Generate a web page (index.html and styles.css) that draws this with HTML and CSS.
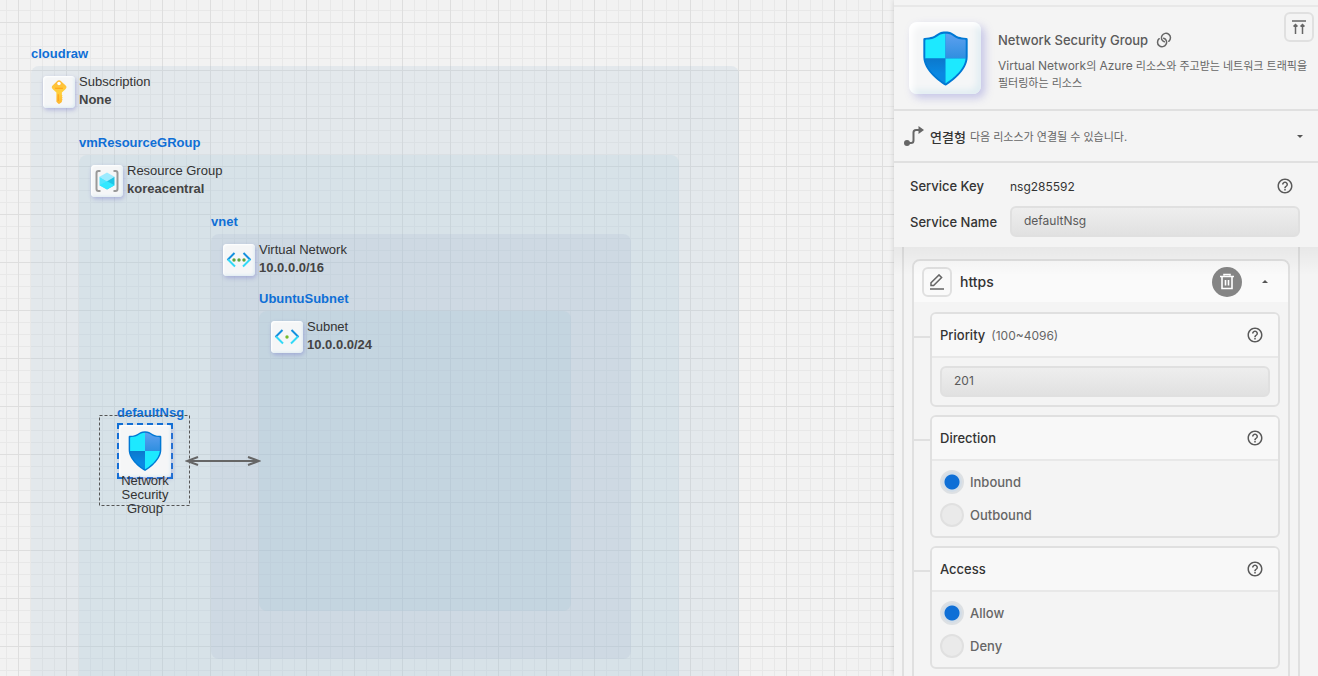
FILE: index.html
```html
<!DOCTYPE html>
<html lang="ko">
<head>
<meta charset="utf-8">
<title>Network Security Group</title>
<link rel="stylesheet" href="styles.css">
</head>
<body>
<svg class="defs" aria-hidden="true">
  <defs>
    <linearGradient id="shieldBlue" x1="0" y1="0" x2="0" y2="1"><stop offset="0" stop-color="#5ea0ef"/><stop offset="1" stop-color="#2f8fe0"/></linearGradient>
    <linearGradient id="shieldDeep" x1="0" y1="0" x2="0" y2="1"><stop offset="0" stop-color="#0c78cc"/><stop offset=".6" stop-color="#0a88e2"/></linearGradient>
    <linearGradient id="keyGold" x1="0" y1="0" x2="0" y2="1"><stop offset="0" stop-color="#feb836"/><stop offset=".5" stop-color="#ffd03c"/><stop offset="1" stop-color="#feb52f"/></linearGradient>
    <symbol id="shield" viewBox="0 0 18 18">
      <path fill="#0078d4" d="M16 8.44c0 4.57-5.53 8.25-6.73 9a.43.43 0 0 1-.46 0C7.57 16.69 2 13 2 8.44v-5.5a.44.44 0 0 1 .43-.44C6.77 2.39 5.78.5 9 .5s2.23 1.89 6.57 2a.44.44 0 0 1 .43.44z"/>
      <path fill="#1de9ff" d="M9 1.17C6 1.17 7 2.9 3 3a.4.4 0 0 0-.38.4V9H9z"/>
      <path fill="url(#shieldBlue)" d="M9 1.17C12 1.17 11 2.9 15 3a.4.4 0 0 1 .38.4V9H9z"/>
      <path fill="url(#shieldDeep)" d="M2.65 9c.37 3.9 5.1 7.1 6.14 7.73a.4.4 0 0 0 .21.06V9z"/>
      <path fill="#1de9ff" d="M15.35 9c-.37 3.9-5.1 7.1-6.14 7.73a.4.4 0 0 1-.21.06V9z"/>
    </symbol>
    <symbol id="help" viewBox="0 0 24 24">
      <path fill="#5a5a5a" d="M11 18h2v-2h-2v2zm1-16C6.48 2 2 6.48 2 12s4.48 10 10 10 10-4.480 10-10S17.52 2 12 2zm0 18c-4.41 0-8-3.59-8-8s3.59-8 8-8 8 3.59 8 8-3.59 8-8 8zm0-14c-2.210 0-4 1.790-4 4h2c0-1.100.9-2 2-2s2 .9 2 2c0 2-3 1.750-3 5h2c0-2.250 3-2.500 3-5 0-2.210-1.790-4-4-4z"/>
    </symbol>
  </defs>
</svg>

<div class="app">
  <main class="canvas">
    <section class="group group-subscription">
      <h2 class="group-name">cloudraw</h2>
      <div class="group-head">
        <span class="tile"><svg width="26" height="26" viewBox="0 0 18 18"><path fill="url(#keyGold)" d="M9 .8c.6 0 1 .3 1.4.7l3.200 3c.8.8.8 1.600 0 2.400l-2.600 2.500v1.600l.5.600-.5.600.5.800-.5.700.5.600-.5.700v.9L9.600 17a.8.800 0 0 1-1.200 0L7.200 15.700V9.400L4.600 6.900c-.8-.8-.8-1.600 0-2.400l3-3C8 1.100 8.400.8 9 .8z"/><circle cx="9" cy="3.100" r="1.200" fill="#fff"/><path fill="#ff9d14" d="M6.300 6h5.400v.8H6.300zM8.100 10.500h.7v4.800h-.7z"/></svg></span>
        <p class="group-text">Subscription<br><b>None</b></p>
      </div>
    </section>
    <section class="group group-resource">
      <h2 class="group-name">vmResourceGRoup</h2>
      <div class="group-head">
        <span class="tile"><svg width="26" height="26" viewBox="0 0 26 26"><path fill="none" stroke="#999" stroke-width="2" d="M6.500 3H4.500Q2.500 3 2.500 5v16q0 2 2 2h2M19.500 3h2q2 0 2 2v16q0 2-2 2h-2"/><path fill="#9cebff" d="m13 4.500 7.500 4.300-7.500 4.400-7.500-4.400z"/><path fill="#50e6ff" d="M5.500 8.800 13 13.200v8.300l-7.500-4.300z"/><path fill="#20c5e6" d="M20.500 8.800 13 13.200v8.300l7.500-4.300z"/><path fill="#32e8ff" d="m5.500 17.200 7.500-4 7.500 4-7.500 4.300z"/></svg></span>
        <p class="group-text">Resource Group<br><b>koreacentral</b></p>
      </div>
    </section>
    <section class="group group-vnet">
      <h2 class="group-name">vnet</h2>
      <div class="group-head">
        <span class="tile"><svg width="26" height="26" viewBox="0 0 26 26" fill="none" stroke-width="2"><path stroke="#1490df" d="m8.500 6-7 7M17.500 6l7 7"/><path stroke="#32d9f7" d="m2 12.500 7 7M24 12.500l-7 7"/><g fill="#5ea33c"><circle cx="8" cy="13" r="1.700"/><circle cx="13" cy="13" r="1.700"/><circle cx="18" cy="13" r="1.700"/></g></svg></span>
        <p class="group-text">Virtual Network<br><b>10.0.0.0/16</b></p>
      </div>
    </section>
    <section class="group group-subnet">
      <h2 class="group-name">UbuntuSubnet</h2>
      <div class="group-head">
        <span class="tile"><svg width="26" height="26" viewBox="0 0 26 26" fill="none" stroke-width="2"><path stroke="#1490df" d="m8.500 6-7 7M17.500 6l7 7"/><path stroke="#32d9f7" d="m2 12.500 7 7M24 12.500l-7 7"/><circle cx="13" cy="13" r="1.700" fill="#76bc2d"/></svg></span>
        <p class="group-text">Subnet<br><b>10.0.0.0/24</b></p>
      </div>
    </section>
    <section class="node">
      <h2 class="node-name">defaultNsg</h2>
      <span class="node-frame"><span class="tile tile-node"><svg width="42" height="42"><use href="#shield"/></svg></span></span>
      <p class="node-text">Network<br>Security<br>Group</p>
    </section>
    <svg class="node-bounds" width="92" height="92"><rect x=".5" y=".5" width="90" height="90" fill="none" stroke="#555" stroke-dasharray="3 2"/></svg>
    <svg class="link-line" width="76" height="12" viewBox="0 0 76 12" fill="none" stroke="#666" stroke-width="2"><path d="M3 6h70M13 2 2 6l11 4M63 2l11 4-11 4"/></svg>
  </main>

  <aside class="panel">
    <header class="resource">
      <span class="tile tile-large"><svg width="57" height="57"><use href="#shield"/></svg></span>
      <div class="resource-text">
        <h1 class="resource-title">Network Security Group
          <a class="resource-link" href="#docs" aria-label="Documentation"><svg width="16" height="16" viewBox="0 0 16 16" fill="none" stroke="#666" stroke-width="1.500" stroke-linecap="round"><path d="M8.300 9.800C5.600 9 4.600 6 6 3.700a4.500 4.500 0 1 1 6.800 5.600"/><path d="M7.700 6.200c2.700.8 3.700 3.800 2.300 6.100a4.500 4.500 0 1 1-6.800-5.600"/></svg></a>
        </h1>
        <p class="resource-desc"><span class="latin">Virtual Network</span>의 <span class="latin">Azure</span> 리소스와 주고받는 네트워크 트래픽을 필터링하는 리소스</p>
      </div>
      <button class="square-button pin-top" aria-label="Scroll to top"><svg width="14" height="14" viewBox="0 0 14 14" fill="none" stroke="#666" stroke-width="1.500"><path d="M0 1h14M3.500 14V5M10.500 14V5M1.500 6.500l2-2 2 2M8.500 6.500l2-2 2 2"/></svg></button>
    </header>

    <section class="connect">
      <svg width="20" height="20" viewBox="0 0 20 20"><circle cx="3" cy="17" r="3" fill="#666"/><path fill="none" stroke="#666" stroke-width="2" d="M3 17h4q2.500 0 2.500-2.500V6.500Q9.500 4 12 4h4"/><path fill="#666" d="m14.500 0 5.500 4-5.500 4z"/></svg>
      <h2 class="connect-title">연결형</h2>
      <p class="connect-text">다음 리소스가 연결될 수 있습니다.</p>
      <button class="caret" aria-label="Expand"><svg width="6" height="3"><path fill="#555" d="M0 0h6L3 3z"/></svg></button>
    </section>

    <section class="service">
      <span class="field-label">Service Key</span>
      <div class="service-key"><span>nsg285592</span><button class="help" aria-label="Help"><svg width="18" height="18"><use href="#help"/></svg></button></div>
      <label class="field-label" for="service-name">Service Name</label>
      <input class="text-input" id="service-name" type="text" value="defaultNsg">
    </section>

    <div class="details">
      <div class="rules">
        <section class="rule">
          <header class="rule-head">
            <button class="square-button" aria-label="Edit"><svg width="16" height="16" viewBox="0 0 16 16" fill="none" stroke="#666" stroke-width="1.500"><path d="M1 15h14M2 11.500V8.800L10 .900l2.600 2.600-8 8z"/></svg></button>
            <h2 class="rule-name">https</h2>
            <button class="delete" aria-label="Delete"><svg width="16" height="18" viewBox="0 0 16 18" fill="none" stroke="#fff" stroke-width="1.600"><path d="M1 3.500h14M5 2.500V1.500h6v1M3 3.500v12h10v-12M6.500 7v5.500M9.500 7v5.500"/></svg></button>
            <button class="caret" aria-label="Collapse"><svg width="6" height="3"><path fill="#555" d="M0 3h6L3 0z"/></svg></button>
          </header>
          <div class="cards">
            <section class="card">
              <header class="card-head"><label class="card-title" for="priority">Priority</label><span class="card-hint">(100~4096)</span><button class="help" aria-label="Help"><svg width="18" height="18"><use href="#help"/></svg></button></header>
              <div class="card-input"><input class="text-input" id="priority" type="text" value="201"></div>
            </section>
            <section class="card">
              <header class="card-head"><h3 class="card-title">Direction</h3><button class="help" aria-label="Help"><svg width="18" height="18"><use href="#help"/></svg></button></header>
              <div class="options">
                <label class="option"><input class="radio" type="radio" name="direction" checked>Inbound</label>
                <label class="option"><input class="radio" type="radio" name="direction">Outbound</label>
              </div>
            </section>
            <section class="card">
              <header class="card-head"><h3 class="card-title">Access</h3><button class="help" aria-label="Help"><svg width="18" height="18"><use href="#help"/></svg></button></header>
              <div class="options">
                <label class="option"><input class="radio" type="radio" name="access" checked>Allow</label>
                <label class="option"><input class="radio" type="radio" name="access">Deny</label>
              </div>
            </section>
          </div>
        </section>
      </div>
    </div>
  </aside>
</div>
</body>
</html>
```
FILE: styles.css
```css
* { box-sizing: border-box; }
body { margin: 0; font-family: Inter, "Noto Sans CJK KR", sans-serif; font-size: 13px; color: #333; }
h1, h2, h3, p { margin: 0; font-size: inherit; font-weight: inherit; }
button { padding: 0; border: 0; background: none; display: flex; align-items: center; justify-content: center; }
svg { display: block; flex: none; }
.defs { position: absolute; width: 0; height: 0; }

.app { display: flex; height: 100vh; overflow: hidden; background: #f4f4f4; }

.canvas {
  position: relative;
  flex: 1;
  overflow: hidden;
  font-family: "Liberation Sans", sans-serif;
  line-height: 18px;
  background-color: #f2f2f2;
  background-image:
    linear-gradient(90deg, #dedede 1px, transparent 1px),
    linear-gradient(#dedede 1px, transparent 1px),
    linear-gradient(90deg, #e8e8e8 1px, transparent 1px),
    linear-gradient(#e8e8e8 1px, transparent 1px);
  background-size: 48px 48px, 48px 48px, 12px 12px, 12px 12px;
  background-position: 18px 22px, 18px 22px, 6px 10px, 6px 10px;
}
.group { position: absolute; border-radius: 8px; }
.group-subscription { left: 31px; top: 66px; width: 708px; height: 720px; background: rgba(175, 198, 214, .22); }
.group-resource { left: 79px; top: 155px; width: 600px; height: 580px; background: rgba(160, 198, 214, .18); }
.group-vnet { left: 211px; top: 234px; width: 420px; height: 425px; background: rgba(168, 186, 208, .2); }
.group-subnet { left: 259px; top: 311px; width: 312px; height: 300px; background: rgba(156, 196, 212, .18); }
.group-name, .node-name { color: #0f6fd6; font-weight: 700; white-space: nowrap; }
.group-name { position: absolute; left: 0; bottom: 100%; padding-bottom: 3px; }
.group-head { display: flex; gap: 4px; padding: 7px 12px; }
.group-head .tile { margin-top: 3px; }
.group-text b { color: #444; }

.tile {
  display: flex;
  align-items: center;
  justify-content: center;
  flex: none;
  width: 32px;
  height: 32px;
  border-radius: 4px;
  background: #f5f6f7;
  box-shadow: 1px 2px 4px rgba(120, 120, 200, .45), inset 1px 1px 2px #fff, inset -1px -1px 3px #dcebf2;
}
.tile-node { width: 52px; height: 52px; }
.tile-large {
  width: 72px;
  height: 72px;
  border-radius: 8px;
  box-shadow: 4px 4px 8px rgba(120, 120, 210, .38), inset 4px 4px 6px #fff, inset -4px -4px 6px #e0edf2;
}

.node { position: absolute; left: 117px; top: 404px; width: 56px; display: flex; flex-direction: column; align-items: center; }
.node-name { align-self: flex-start; }
.node-frame { display: block; margin-top: 1px; border: 2px dashed #0f6fd6; }
.node-text { margin-top: -5px; text-align: center; line-height: 14px; color: #333; }
.node-bounds { position: absolute; left: 99px; top: 415px; }
.link-line { position: absolute; left: 185px; top: 455px; }

.panel {
  position: relative;
  flex: none;
  width: 424px;
  display: flex;
  flex-direction: column;
  background: #f4f4f4;
  box-shadow: 0 0 5px rgba(0, 0, 0, .16);
}
.resource {
  display: flex;
  margin-top: 5px;
  padding: 15px 4px 15px 15px;
  border-top: 2px solid #e8e8e8;
  border-bottom: 2px solid #e0e0e0;
}
.resource-text { flex: 1; padding: 8px 0 0 17px; }
.resource-title { display: flex; align-items: center; gap: 8px; line-height: 20px; font-weight: 500; color: #5a5a5a; }
.resource-desc { margin-top: 7px; margin-right: -24px; font-size: 11px; line-height: 17px; color: #666; word-break: keep-all; }
.latin { font-size: 12px; }
.square-button { flex: none; width: 30px; height: 30px; border: 2px solid #e0e0e0; border-radius: 6px; }
.pin-top { margin-top: -10px; }

.connect { display: flex; align-items: center; height: 52px; padding: 0 10px; border-bottom: 2px solid #e0e0e0; }
.connect-title { margin-left: 6px; font-weight: 500; }
.connect-text { margin-left: 4px; flex: 1; font-size: 11px; color: #666; }
.caret { flex: none; width: 16px; height: 24px; }

.service {
  display: grid;
  grid-template-columns: 100px 1fr;
  grid-template-rows: 30px 31px;
  row-gap: 5px;
  align-items: center;
  padding: 8px 18px 10px 16px;
}
.field-label { font-weight: 500; }
.service-key { display: flex; align-items: center; justify-content: space-between; padding-right: 6px; font-size: 12px; }
.text-input {
  display: block;
  width: 100%;
  height: 31px;
  padding: 0 12px 2px;
  border: 2px solid #e0e0e0;
  border-radius: 6px;
  background: linear-gradient(#eee, #e1e1e1);
  font: 12px Inter, sans-serif;
  color: #5a5a5a;
}

.details { position: relative; flex: 1; min-height: 0; overflow: hidden; padding: 0 18px 0 8px; }
.details::before {
  content: "";
  position: absolute;
  inset: 0 0 auto;
  height: 28px;
  background: linear-gradient(rgba(0, 0, 0, .05), transparent);
  pointer-events: none;
}
.rules { padding: 12px 8px 0; border: solid #e0e0e0; border-width: 0 2px; }
.rule { border: 2px solid #e0e0e0; border-radius: 8px; }
.rule-head { display: flex; align-items: center; height: 41px; padding: 0 15px 0 8px; border-radius: 6px 6px 0 0; background: #fafafa; }
.rule-name { flex: 1; padding-left: 8px; font-size: 14px; font-weight: 500; }
.delete { width: 30px; height: 30px; border-radius: 50%; background: #858585; margin-right: 15px; }
.cards { display: flex; flex-direction: column; gap: 8px; padding: 10px 8px 16px 16px; }
.card { position: relative; border: 2px solid #e0e0e0; border-radius: 6px; }
.card::before { content: ""; position: absolute; top: 22px; right: 100%; width: 18px; height: 2px; background: #e0e0e0; }
.card-head { display: flex; align-items: center; height: 44px; padding: 0 14px 0 8px; border-bottom: 2px solid #e8e8e8; border-radius: 4px 4px 0 0; background: #f8f8f8; }
.card-title { font-weight: 500; }
.card-hint { padding-left: 6px; font-size: 12px; color: #666; }
.card-head .help { margin-left: auto; }
.card-input { padding: 8px; }
.options { padding: 4px 8px 5px; }
.option { display: flex; align-items: center; gap: 6px; height: 33px; font-weight: 500; color: #666; }
.radio { appearance: none; flex: none; width: 24px; height: 24px; margin: 0; border: 2px solid #e0e0e0; border-radius: 50%; background: #eaeaea; }
.radio:checked { border-color: #dde0e3; background: radial-gradient(circle, #0f6fd6 7px, #d2dde8 8px); }
```
